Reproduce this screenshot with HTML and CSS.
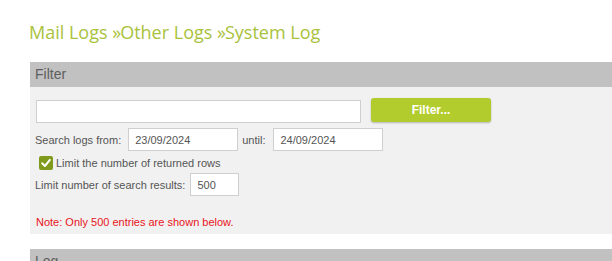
FILE: index.html
```html
<!DOCTYPE html>
<html>
<head>
<meta charset="utf-8">
<link rel="stylesheet" href="styles.css">
</head>
<body>
<div class="page">
  <h1 class="crumbs">Mail Logs <span class="sep">»</span>Other Logs <span class="sep">»</span>System Log</h1>
  <div class="panel">
    <div class="panel-head">Filter</div>
    <div class="panel-body">
      <div class="row row-search">
        <input class="txt txt-wide" type="text" value="">
        <button class="btn">Filter...</button>
      </div>
      <div class="row row-dates">
        <span class="lbl">Search logs from:</span>
        <input class="txt txt-date" type="text" value="23/09/2024">
        <span class="lbl">until:</span>
        <input class="txt txt-date" type="text" value="24/09/2024">
      </div>
      <div class="row row-check">
        <span class="check"><svg width="14" height="14" viewBox="0 0 14 14"><rect width="14" height="14" rx="2" fill="#7f9a1c"/><path d="M3.2 7.2 L5.9 10 L10.9 3.9" fill="none" stroke="#fff" stroke-width="2" stroke-linecap="round" stroke-linejoin="round"/></svg></span>
        <span class="lbl">Limit the number of returned rows</span>
      </div>
      <div class="row row-limit">
        <span class="lbl">Limit number of search results:</span>
        <input class="txt txt-num" type="text" value="500">
      </div>
      <div class="note">Note: Only 500 entries are shown below.</div>
    </div>
  </div>
  <div class="panel">
    <div class="panel-head">Log</div>
  </div>
</div>
</body>
</html>
```
FILE: styles.css
```css
html, body { margin: 0; padding: 0; background: #fff; overflow: hidden; }
body { font-family: "Liberation Sans", Arial, sans-serif; font-size: 11px; color: #555; }
.page { padding: 20px 0 0 30px; }
.crumbs {
  margin: 0 0 0 -1px;
  font-family: "Open Sans", "DejaVu Sans", sans-serif;
  font-weight: 400;
  font-size: 18px;
  line-height: 24px;
  color: #a9c23c;
  letter-spacing: 0;
}
.crumbs .sep { letter-spacing: -1px; }
.panel { margin-top: 18px; }
.panel + .panel { margin-top: 15px; }
.panel-head {
  background: #c1c1c1;
  height: 25px;
  line-height: 25px;
  padding-left: 5px;
  font-size: 14px;
  color: #5e5e5e;
}
.panel-body {
  background: #f1f1f1;
  padding: 11px 0 8px 5px;
  height: 128px;
}
.row { display: flex; align-items: center; }
.txt {
  box-sizing: border-box;
  border: 1px solid #cfcfcf;
  background: #fff;
  font-family: "Liberation Sans", Arial, sans-serif;
  font-size: 11px;
  color: #555;
  padding: 0 0 0 6px;
  height: 23px;
  margin: 0;
  outline: none;
}
.row-search { margin-left: 1px; height: 24px; }
.txt-wide { width: 325px; height: 23px; margin-top: 2px; }
.btn {
  margin-left: 10px;
  width: 120px;
  height: 24px;
  border: none;
  border-radius: 3px;
  background: #b3cc2d;
  color: #fff;
  font-family: "Liberation Sans", Arial, sans-serif;
  font-weight: bold;
  font-size: 12px;
  box-shadow: 0 1px 2px rgba(0,0,0,0.25);
  padding: 0;
}
.row-dates { margin-top: 6px; }
.row-dates .lbl:first-child { margin-right: 7px; }
.txt-date { width: 110px; }
.row-dates .txt-date + .lbl { margin: 0 8px 0 4px; }
.row-check { margin-top: 4px; margin-left: 4px; height: 15px; }
.check { display: inline-flex; width: 14px; height: 14px; margin-right: 3px; }
.row-limit { margin-top: 3px; }
.row-limit .lbl { margin-right: 5px; }
.txt-num { width: 49px; }
.note { color: #e8141b; margin-top: 20px; margin-left: 1px; }
```
